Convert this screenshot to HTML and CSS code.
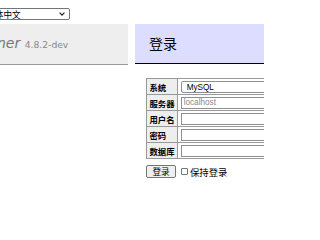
FILE: index.html
```html
<!DOCTYPE html>
<html lang="zh">
<head>
<meta charset="utf-8">
<title>登录 - Adminer</title>
<link rel="stylesheet" href="styles.css">
</head>
<body>
<div class="viewport">
<div class="page">
  <form class="lang">
    <span class="lang-label">语言:</span>
    <select class="lang-select"><option>简体中文</option></select>
  </form>
  <div class="main">
    <div class="menu">
      <h1 class="title"><a class="logo" href="#">Adminer</a> <span class="version">4.8.2-dev</span></h1>
    </div>
    <div class="content">
      <h2 class="heading">登录</h2>
      <form class="login">
        <table class="fields">
          <tr><th>系统</th><td><select class="field field-select"><option>MySQL</option></select></td></tr>
          <tr><th>服务器</th><td><input class="field" placeholder="localhost"></td></tr>
          <tr><th>用户名</th><td><input class="field"></td></tr>
          <tr><th>密码</th><td><input class="field" type="password"></td></tr>
          <tr><th>数据库</th><td><input class="field"></td></tr>
        </table>
        <p class="actions">
          <button type="button" class="submit">登录</button>
          <label class="remember"><input type="checkbox" class="check">保持登录</label>
        </p>
      </form>
    </div>
  </div>
</div>
</div>
</body>
</html>
```

FILE: styles.css
```css
html, body {
  margin: 0;
  padding: 0;
  background: #fff;
  overflow: hidden;
}
body {
  color: #000;
  font-family: "DejaVu Sans", "Noto Sans CJK SC", sans-serif;
  font-size: 9.33px;
  line-height: 1.25;
  width: 264px;
  height: 200px;
}
.viewport {
  width: 264px;
  height: 200px;
  overflow: hidden;
}
.page {
  margin-left: -49px;
  width: 313px;
}
.lang {
  height: 24px;
  box-sizing: border-box;
  padding: 3.5px 0 0 9px;
  display: flex;
  align-items: center;
  align-self: flex-start;
  gap: 3px;
  margin: 0;
}
.lang-label {
  font-family: "Noto Sans CJK SC", sans-serif;
  font-size: 9.33px;
  line-height: 12px;
}
.lang-select {
  -webkit-appearance: none;
  appearance: none;
  width: 86px;
  height: 12px;
  box-sizing: border-box;
  font-family: "Noto Sans CJK SC", sans-serif;
  font-size: 8.6px;
  line-height: 10px;
  padding: 0 0 0 1px;
  border: 1px solid #767676;
  border-radius: 2px;
  background: #fff url("data:image/svg+xml;utf8,<svg xmlns='http://www.w3.org/2000/svg' width='6' height='4' viewBox='0 0 6 4'><path d='M0.6 0.7 L3 3.1 L5.4 0.7' fill='none' stroke='%23222' stroke-width='1.2'/></svg>") no-repeat right 4px center;
  background-size: 6px 4px;
  color: #000;
}
.main {
  display: flex;
  align-items: flex-start;
}
.menu {
  width: 177px;
  flex: none;
}
.title {
  margin: 0;
  font-size: 14px;
  font-weight: normal;
  line-height: 17px;
  padding: 11px 14px 11px 10px;
  background: #eee;
  border-bottom: 1px solid #999;
  color: #777;
  white-space: nowrap;
}
.logo {
  color: #777;
  font-style: italic;
  text-decoration: none;
}
.version {
  color: #888;
  font-size: 9.2px;
  font-weight: normal;
}
.content {
  flex: 1;
  min-width: 0;
  margin-left: 7px;
}
.heading {
  margin: 0 0 14px 0;
  font-size: 14px;
  font-weight: normal;
  line-height: 17px;
  padding: 11px 14px;
  background: #ddf;
  border-bottom: 1px solid #000;
  color: #000;
  font-family: "Noto Sans CJK SC", sans-serif;
}
.login {
  margin: 0;
}
.fields {
  margin: 0 0 0 11px;
  border-collapse: collapse;
  font-size: 8.4px;
}
.fields th, .fields td {
  border: 1px solid #999;
  padding: 1.5px 2.5px;
  line-height: 12px;
}
.fields th {
  background: #eee;
  text-align: left;
  font-weight: bold;
  font-family: "Noto Sans CJK SC", sans-serif;
  white-space: nowrap;
}
.fields td {
  padding-right: 0;
}
.field {
  display: block;
  width: 130px;
  height: 12px;
  box-sizing: border-box;
  margin: 0;
  border: 1px solid #8f8f8f;
  padding: 0 2px;
  font-family: "Liberation Sans", Arial, sans-serif;
  font-size: 8.2px;
  background: #fff;
  color: #000;
}
.field::placeholder {
  color: #8a8a8a;
}
.field-select {
  padding: 0 1px;
  border-radius: 2px;
}
.actions {
  margin: 6px 0 0 11px;
  display: flex;
  align-items: center;
  gap: 3px;
}
.submit {
  height: 13px;
  width: 30px;
  box-sizing: border-box;
  padding: 0;
  margin: 0;
  border: 1px solid #767676;
  border-radius: 2px;
  background: #efefef;
  font-family: "Noto Sans CJK SC", sans-serif;
  font-size: 8.6px;
  line-height: 11px;
  color: #000;
}
.remember {
  display: flex;
  align-items: center;
  font-family: "Noto Sans CJK SC", sans-serif;
  font-size: 9.33px;
  line-height: 12px;
}
.check {
  -webkit-appearance: none;
  appearance: none;
  width: 7px;
  height: 7px;
  box-sizing: border-box;
  border: 1px solid #767676;
  border-radius: 1px;
  background: #fff;
  margin: 0 2px 0 2px;
}
```
